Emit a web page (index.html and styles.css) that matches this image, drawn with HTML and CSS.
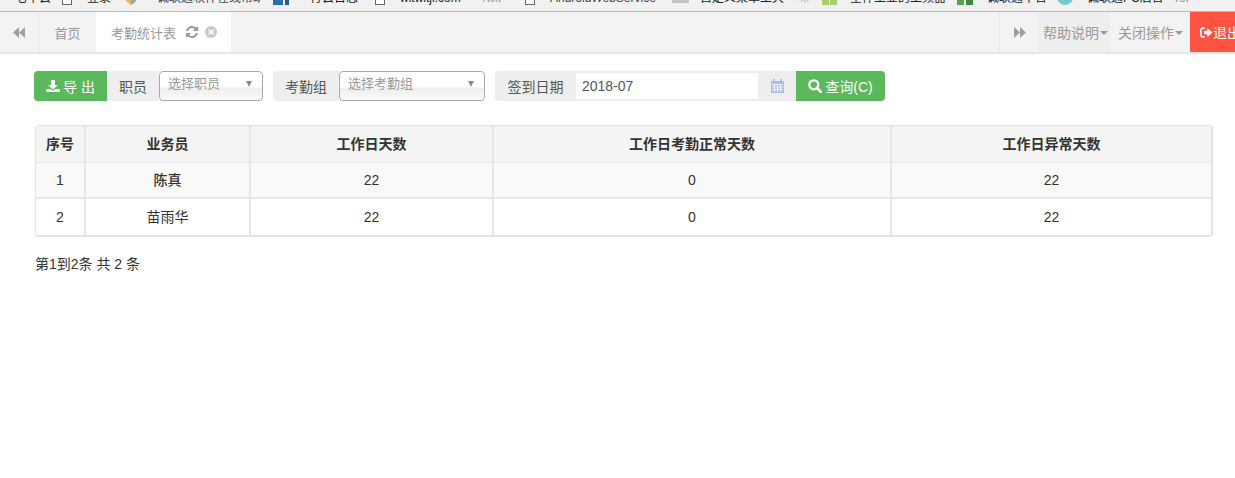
FILE: index.html
```html
<!DOCTYPE html>
<html lang="zh-CN">
<head>
<meta charset="utf-8">
<title>考勤统计表</title>
<link rel="stylesheet" href="styles.css">
</head>
<body>
<div class="bookmarks">
  <span class="bm bm-a">七牛云</span>
  <span class="page page-a"></span><span class="bm bm-b">登录</span>
  <svg class="fav fav-a" viewBox="0 0 16 8"><path d="M1 0h14l-3 5-4 3-4-3z" fill="#e9b44c"/><path d="M8 0h7l-3 5-4 3z" fill="#6fb1d8"/></svg><span class="bm bm-c">诚联通软件在线帮助</span>
  <svg class="fav fav-b" viewBox="0 0 16 8"><rect width="10" height="8" fill="#2a6db0"/><rect x="12" width="4" height="8" fill="#1f5c9e"/></svg><span class="bm bm-d">行云日志</span>
  <span class="page page-d"></span><span class="bm bm-e">witwitji.com</span><span class="bm bm-f">/wit</span>
  <span class="page page-e"></span><span class="bm bm-g">AndroidWebService</span>
  <span class="smudge"></span><span class="bm bm-h">自定义菜单工具</span><span class="bm bm-x">咪</span>
  <span class="fav-c"><i></i><i></i></span><span class="bm bm-i">全件工业的工频器</span>
  <svg class="fav fav-d" viewBox="0 0 16 8"><rect width="7" height="8" fill="#5aa24a"/><rect x="9" width="7" height="8" fill="#3f8a3a"/></svg><span class="bm bm-j">诚联通平台</span>
  <span class="fav-e"></span><span class="bm bm-k">诚联通PC后台</span><span class="bm bm-l">Tor</span>
</div>

<nav class="tabbar">
  <button class="nav-arrow left-arrow" type="button" aria-label="向左">
    <svg class="arrow-icon" viewBox="0 0 12 11"><path d="M6 0v11L0 5.500zM12 0v11L6 5.500z"/></svg>
  </button>
  <a class="tab">首页</a>
  <a class="tab tab-active">考勤统计表
    <svg class="tab-refresh" viewBox="0 0 1536 1536"><path d="M1511 928q0 5-1 7-64 268-268 434.500T764 1536q-146 0-282.500-55T238 1324l-129 129q-19 19-45 19t-45-19-19-45V960q0-26 19-45t45-19h448q26 0 45 19t19 45-19 45l-137 137q71 66 161 102t187 36q134 0 250-65t186-179q11-17 53-117 8-23 30-23h192q13 0 22.500 9.500t9.500 22.500zm25-800v448q0 26-19 45t-45 19h-448q-26 0-45-19t-19-45 19-45l138-138Q969 256 768 256q-134 0-250 65T332 500q-11 17-53 117-8 23-30 23H50q-13 0-22.500-9.500T18 608v-7q65-268 270-434.500T768 0q146 0 284 55.500T1297 212l130-129q19-19 45-19t45 19 19 45z"/></svg>
    <svg class="tab-close" viewBox="0 0 16 16"><circle cx="8" cy="8" r="6" /><path d="M5.700 5.700l4.600 4.600M10.300 5.700l-4.600 4.600"/></svg>
  </a>
  <div class="tab-spacer"></div>
  <button class="nav-arrow right-arrow" type="button" aria-label="向右">
    <svg class="arrow-icon" viewBox="0 0 12 11"><path d="M0 0v11l6-5.500zM6 0v11l6-5.500z"/></svg>
  </button>
  <a class="menu menu-help">帮助说明<i class="caret"></i></a>
  <a class="menu menu-close">关闭操作<i class="caret"></i></a>
  <a class="logout">
    <svg class="logout-icon" viewBox="0 0 14 12"><path d="M5 1.200H3A2 2 0 0 0 1 3.200v5.600a2 2 0 0 0 2 2h2" fill="none" stroke="#fff" stroke-width="1.800"/><path d="M4.500 4H8V1l5.500 5L8 11V8H4.500z" fill="#fff"/></svg>退出
  </a>
</nav>

<main class="content">
  <form class="toolbar">
    <div class="group">
      <button class="btn btn-export" type="button">
        <svg class="btn-icon" viewBox="0 0 14 12"><path d="M5 0h4v5h3L7 9.500 2 5h3z"/><path d="M0 9h4l3 1.500L10 9h4v3H0z"/></svg>导 出</button>
      <span class="addon addon-staff">职员</span>
      <span class="select select-staff">选择职员<i class="select-caret"></i></span>
    </div>
    <div class="group">
      <span class="addon addon-start addon-team">考勤组</span>
      <span class="select select-team">选择考勤组<i class="select-caret"></i></span>
    </div>
    <div class="group">
      <span class="addon addon-start addon-date">签到日期</span>
      <span class="date-input">2018-07</span>
      <span class="addon addon-cal">
        <svg class="cal-icon" viewBox="0 0 13 14"><path d="M0 2h2V0h2v2h5V0h2v2h2v12H0z" fill="#a9c0ee"/><path d="M1 5.500h11M1 8h11M1 10.500h11M3.500 5v8M6.500 5v8M9.500 5v8" stroke="#fff" stroke-width=".8"/></svg>
      </span>
      <button class="btn btn-search" type="button">
        <svg class="btn-icon search-icon" viewBox="0 0 14 14"><circle cx="5.800" cy="5.800" r="4.500" fill="none" stroke="#fff" stroke-width="2.200"/><path d="M9 9l4 4" stroke="#fff" stroke-width="2.600" stroke-linecap="round"/></svg>查询(C)</button>
    </div>
  </form>

  <div class="table-wrap">
    <table class="grid">
      <colgroup>
        <col class="c1"><col class="c2"><col class="c3"><col class="c4"><col class="c5">
      </colgroup>
      <thead>
        <tr><th>序号</th><th>业务员</th><th>工作日天数</th><th>工作日考勤正常天数</th><th>工作日异常天数</th></tr>
      </thead>
      <tbody>
        <tr class="odd"><td>1</td><td>陈真</td><td>22</td><td>0</td><td>22</td></tr>
        <tr><td>2</td><td>苗雨华</td><td>22</td><td>0</td><td>22</td></tr>
      </tbody>
    </table>
  </div>
  <p class="summary">第1到2条 共 2 条</p>
</main>
</body>
</html>
```
FILE: styles.css
```css
* { box-sizing: border-box; }
html, body { margin: 0; padding: 0; height: 100%; overflow: hidden; }
body {
  background: #fff;
  color: #333;
  font-family: "Liberation Sans", "Noto Sans CJK SC", sans-serif;
  font-size: 14px;
}

/* clipped browser bookmark bar */
.bookmarks {
  height: 12px;
  background: #f1f1f1;
  border-bottom: 1px solid #b9b9b9;
  display: flex;
  align-items: flex-end;
  overflow: hidden;
  padding-bottom: 6px;
  font-size: 12px;
  line-height: 14px;
  color: #222;
  white-space: nowrap;
}
.bm { flex: none; }
.bm-a { margin-left: 15px; width: 36px; }
.page {
  flex: none;
  width: 10px; height: 12px;
  border: 1px solid #666;
  background: #fff;
}
.page-a { margin-left: 11px; }
.bm-b { margin-left: 15px; width: 26px; }
.fav { flex: none; width: 16px; height: 8px; }
.fav-a { margin-left: 10px; }
.bm-c { margin-left: 18px; width: 103px; color: #444; overflow: hidden; }
.fav-b { margin-left: 13px; }
.bm-d { margin-left: 21px; width: 48px; }
.page-d { margin-left: 17px; }
.bm-e { margin-left: 15px; width: 72px; color: #223; }
.bm-f { margin-left: 11px; width: 24px; color: #999; }
.page-e { margin-left: 18px; }
.bm-g { margin-left: 15px; width: 107px; color: #444; overflow: hidden; }
.smudge { flex: none; width: 17px; height: 3px; background: #c4c4c4; margin: 0 0 2px 15px; }
.bm-h { margin-left: 11px; width: 84px; }
.bm-x { margin-left: 13px; width: 12px; color: #bbb; }
.fav-c { flex: none; display: flex; gap: 1px; margin-left: 13px; }
.fav-c i { width: 7px; height: 8px; background: #a8cf6c; }
.bm-i { margin-left: 13px; width: 96px; }
.fav-d { margin-left: 11px; }
.bm-j { margin-left: 14px; width: 60px; }
.fav-e { flex: none; width: 16px; height: 8px; background: #6fcfc8; margin-left: 10px; border-radius: 0 0 8px 8px; }
.bm-k { margin-left: 14px; width: 73px; }
.bm-l { margin-left: 13px; color: #999; }

/* tab bar */
.tabbar {
  height: 42px;
  display: flex;
  align-items: stretch;
  background: #f3f3f3;
  border-bottom: 2px solid #e7e7e7;
  color: #999;
}
.nav-arrow {
  flex: none;
  width: 39px;
  padding: 0;
  background: #f3f3f3;
  border: 0;
  display: flex;
  align-items: center;
  justify-content: center;
}
.left-arrow { border-right: 1px solid #e7e7e7; }
.right-arrow { width: 40px; border-left: 1px solid #e7e7e7; }
.arrow-icon { width: 12px; height: 11px; fill: #a0a0a0; }
.tab {
  flex: none;
  display: flex;
  align-items: center;
  justify-content: center;
  color: #999;
  font-size: 13px;
}
.tab:not(.tab-active) { width: 57px; }
.tab-active {
  width: 135px;
  background: #fff;
  justify-content: flex-start;
  padding-left: 15px;
}
.tab-refresh { width: 12px; height: 12px; fill: #999; margin-left: 10px; }
.tab-close { width: 16px; height: 16px; margin-left: 5px; }
.tab-close circle { fill: #c9c9c9; }
.tab-close path { stroke: #fff; stroke-width: 1.400; fill: none; }
.tab-spacer { flex: 1; }
.menu {
  flex: none;
  display: flex;
  align-items: center;
  color: #999;
  padding-left: 4px;
}
.menu-help { width: 71px; background: #eee; }
.menu-close { width: 80px; padding-left: 8px; }
.caret {
  width: 0; height: 0;
  margin-left: 1px; margin-top: 2px;
  border-top: 4px solid #999;
  border-left: 4px solid transparent;
  border-right: 4px solid transparent;
}
.logout {
  flex: none;
  width: 45px;
  background: #fe5340;
  color: #fff;
  display: flex;
  align-items: center;
  padding-left: 10px;
  white-space: nowrap;
  overflow: hidden;
}
.logout-icon { flex: none; width: 13px; height: 11px; }

/* toolbar */
.content { padding: 17px 22px 0 34px; }
.toolbar { display: flex; gap: 10px; height: 30px; }
.group { display: flex; align-items: stretch; }
.btn {
  border: 0;
  padding: 0;
  margin: 0;
  background: #5cb85c;
  color: #fff;
  font: inherit;
  display: flex;
  align-items: center;
  justify-content: center;
}
.btn-export { width: 73px; border-radius: 4px 0 0 4px; }
.btn-search { width: 89px; border-radius: 0 4px 4px 0; }
.btn-icon { width: 14px; height: 12px; margin-right: 3px; fill: #fff; }
.search-icon { height: 14px; margin-right: 3px; }
.addon {
  background: #eee;
  color: #555;
  display: flex;
  align-items: center;
  justify-content: center;
  flex: none;
}
.addon-start { border-radius: 4px 0 0 4px; }
.addon-staff { width: 52px; }
.addon-team { width: 66px; }
.addon-date { width: 81px; }
.addon-cal { width: 38px; border-radius: 0; }
.select {
  flex: none;
  border: 1px solid #aaa;
  border-radius: 4px;
  background: linear-gradient(#fff 0, #fff 50%, #eee 60%, #fafafa 100%);
  color: #999;
  padding: 3px 0 0 8px;
  font-size: 13px;
  line-height: 18px;
  display: flex;
  align-items: flex-start;
  justify-content: space-between;
}
.select-staff { width: 104px; }
.select-team { width: 146px; }
.select-caret {
  width: 0; height: 0;
  margin: 6px 10px 0 0;
  border-top: 6px solid #888;
  border-left: 3.500px solid transparent;
  border-right: 3.500px solid transparent;
}
.cal-icon { width: 13px; height: 14px; }
.date-input {
  flex: none;
  width: 182px;
  background: #fff;
  border: solid #eee;
  border-width: 2px 0;
  color: #555;
  padding-left: 6px;
  display: flex;
  align-items: center;
}

/* table */
.table-wrap {
  margin: 24px 0 0 1px;
  width: 1178px;
  height: 112px;
  border: 1px solid #e3e3e3;
  border-width: 1px 2px 2px 1px;
  border-radius: 4px;
  overflow: hidden;
}
.grid {
  width: 100%;
  border-collapse: separate;
  border-spacing: 0;
  table-layout: fixed;
}
.c1 { width: 48px; }
.c2 { width: 165px; }
.c3 { width: 243px; }
.c4 { width: 398px; }
.grid th, .grid td {
  text-align: center;
  padding: 0;
  line-height: 20px;
  border-left: 2px solid #e7e7e7;
}
.grid th:first-child, .grid td:first-child { border-left: 0; }
.grid th {
  height: 37px;
  background: #f4f4f4;
  border-bottom: 1px solid #e7e7e7;
  color: #333;
  font-weight: bold;
}
.grid td { height: 36px; border-bottom: 2px solid #e7e7e7; }
.grid tbody tr:last-child td { border-bottom: 0; height: 36px; }
.odd td { background: #f9f9f9; }
.odd td:nth-child(2) { font-weight: 500; }
.summary { margin: 18px 0 0 1px; line-height: 18px; color: #333; }
```
